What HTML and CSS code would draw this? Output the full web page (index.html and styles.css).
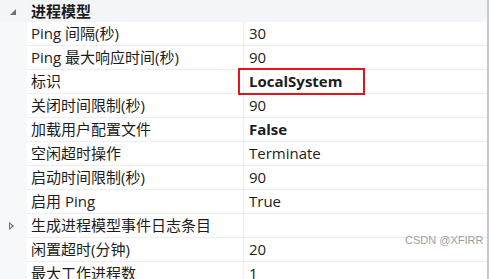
FILE: index.html
```html
<!DOCTYPE html>
<html lang="zh-CN">
<head>
  <meta charset="UTF-8" />
  <title>进程模型</title>
  <link rel="stylesheet" href="styles.css">
</head>
<body>
  <div class="grid">
    <div class="row category">
      <div class="gutter"><span class="tri-open"></span></div>
      <div class="cat-name">进程模型</div>
    </div>
    <div class="row"><div class="gutter"></div><div class="name">Ping 间隔(秒)</div><div class="value">30</div></div>
    <div class="row"><div class="gutter"></div><div class="name">Ping 最大响应时间(秒)</div><div class="value">90</div></div>
    <div class="row"><div class="gutter"></div><div class="name">标识</div><div class="value bold">LocalSystem</div></div>
    <div class="row"><div class="gutter"></div><div class="name">关闭时间限制(秒)</div><div class="value">90</div></div>
    <div class="row"><div class="gutter"></div><div class="name">加载用户配置文件</div><div class="value bold">False</div></div>
    <div class="row"><div class="gutter"></div><div class="name">空闲超时操作</div><div class="value">Terminate</div></div>
    <div class="row"><div class="gutter"></div><div class="name">启动时间限制(秒)</div><div class="value">90</div></div>
    <div class="row"><div class="gutter"></div><div class="name">启用 Ping</div><div class="value">True</div></div>
    <div class="row"><div class="gutter"><span class="tri-closed"></span></div><div class="name">生成进程模型事件日志条目</div><div class="value"></div></div>
    <div class="row"><div class="gutter"></div><div class="name">闲置超时(分钟)</div><div class="value">20</div></div>
    <div class="row"><div class="gutter"></div><div class="name">最大工作进程数</div><div class="value">1</div></div>

    <div class="highlight"></div>
    <div class="watermark">CSDN @XFIRR</div>
  </div>
</body>
</html>
```

FILE: styles.css
```css
* {
  box-sizing: border-box;
  margin: 0;
  padding: 0;
}

body {
  background: #ffffff;
  font-family: "Open Sans", "Noto Sans CJK SC", sans-serif;
  font-size: 15px;
  color: #1c1c1c;
  overflow: hidden;
}

.grid {
  position: relative;
  width: 489px;
  height: 279px;
  border-right: 2px solid #c9c9cc;
}

.row {
  display: flex;
  height: 24px;
}

.gutter {
  width: 27px;
  flex: none;
  background: #f7f8fa;
  display: flex;
  align-items: center;
  justify-content: center;
  padding-right: 2px;
}

.name {
  width: 217px;
  flex: none;
  padding-left: 4px;
  line-height: 23px;
  border-right: 1px solid #eceef3;
  border-bottom: 1px solid #eceef3;
  white-space: nowrap;
}

.value {
  flex: 1;
  padding-left: 5px;
  line-height: 23px;
  border-bottom: 1px solid #eceef3;
}

.bold {
  font-weight: bold;
}

.category {
  height: 22px;
  background: #f3f5f9;
}

.category .gutter {
  background: #f3f5f9;
}

.cat-name {
  padding-left: 4px;
  line-height: 22px;
  font-weight: bold;
}

.tri-open {
  width: 0;
  height: 0;
  border-left: 6px solid transparent;
  border-bottom: 6px solid #707070;
  margin-top: 1px;
}

.tri-closed {
  width: 0;
  height: 0;
  border-top: 4px solid transparent;
  border-bottom: 4px solid transparent;
  border-left: 5px solid #6a6a6a;
  position: relative;
  margin-left: -2px;
}

.tri-closed::after {
  content: "";
  position: absolute;
  left: -4px;
  top: -2px;
  border-top: 2px solid transparent;
  border-bottom: 2px solid transparent;
  border-left: 2px solid #f7f8fa;
}

.highlight {
  position: absolute;
  left: 238px;
  top: 68px;
  width: 127px;
  height: 27px;
  border: 2px solid #e3141c;
}

.watermark {
  position: absolute;
  left: 405px;
  top: 234px;
  font-family: "Liberation Sans", sans-serif;
  font-size: 11px;
  color: #a0a0a0;
}
```
